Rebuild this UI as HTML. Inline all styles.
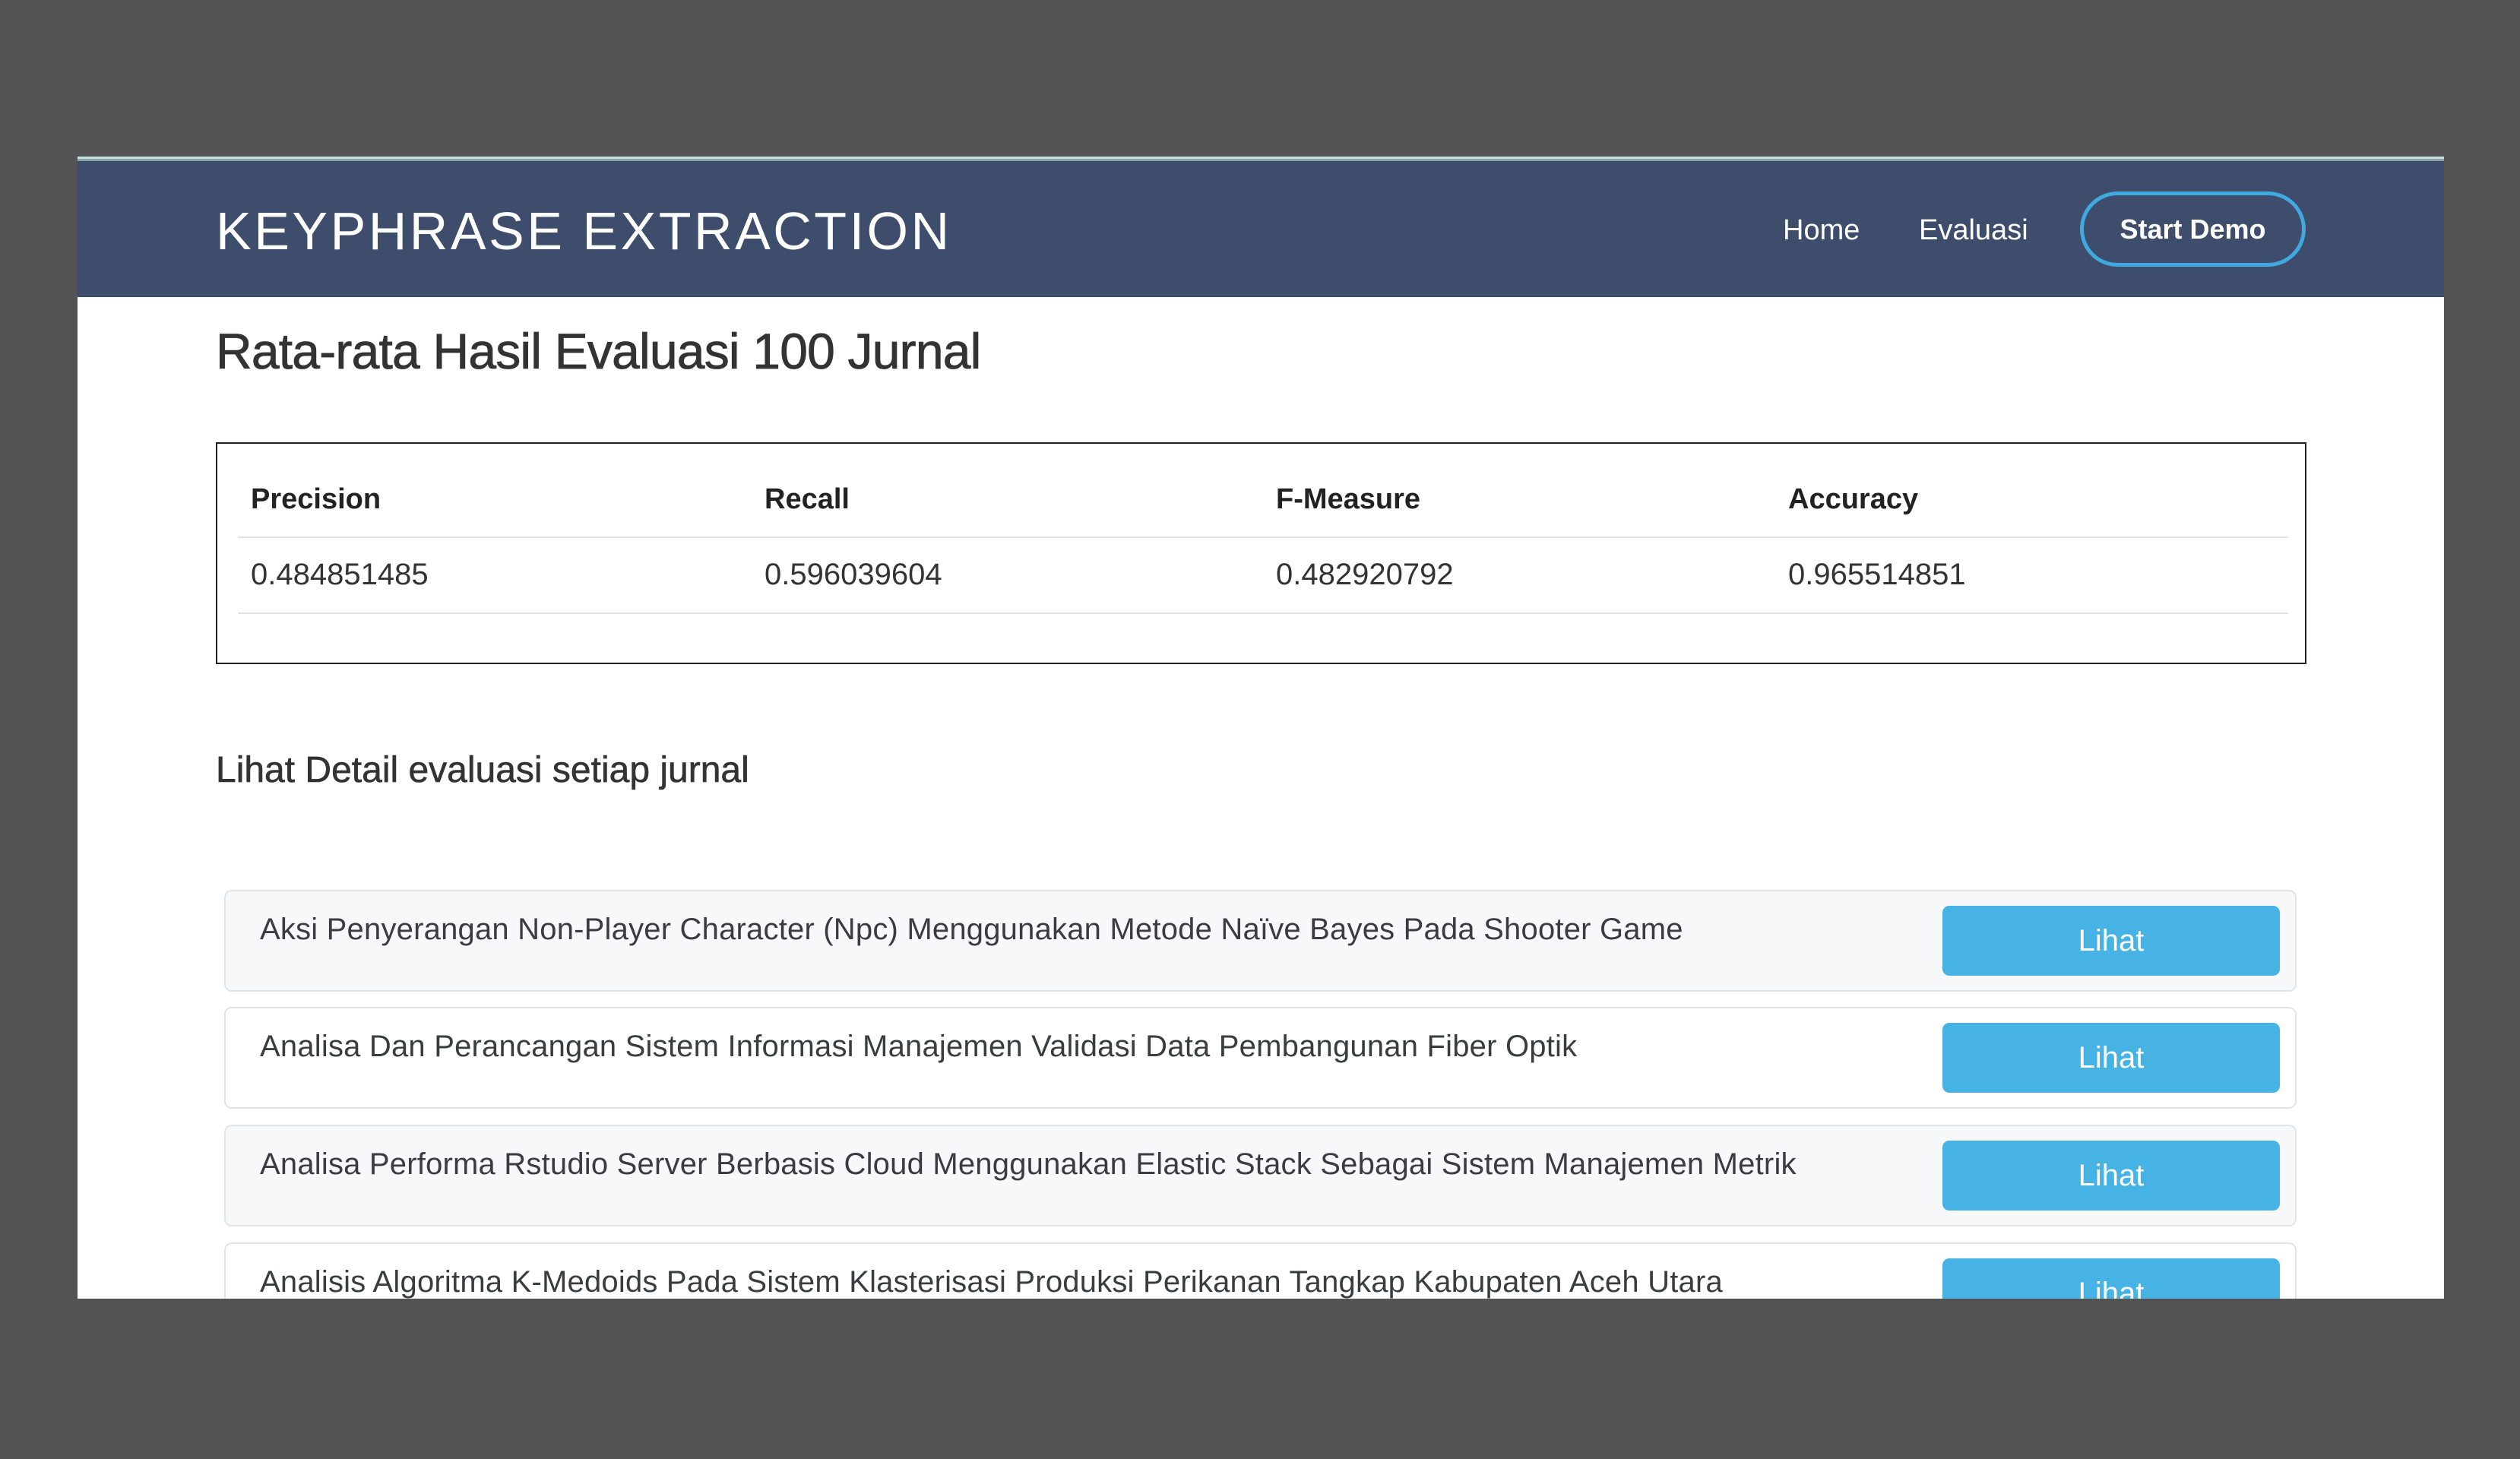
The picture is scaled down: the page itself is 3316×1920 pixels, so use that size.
<!DOCTYPE html>
<html><head><meta charset="utf-8"><style>
*{margin:0;padding:0;box-sizing:border-box}
body{width:3316px;height:1920px;background:#535353;position:relative;overflow:hidden;font-family:"Liberation Sans",sans-serif;color:#37393d}
.frame{position:absolute;left:102px;top:206px;width:3114px;height:1503px;background:#fff;overflow:hidden}
.topline{position:absolute;left:0;top:0;width:100%;height:3px;background:#c5dfe0}
.topline2{position:absolute;left:0;top:3px;width:100%;height:3px;background:#8fa4ab}
.nav{position:absolute;left:0;top:6px;width:100%;height:179px;background:#3e4d6b}
.abs{position:absolute;white-space:nowrap}
.logo{left:182px;top:52px;font-size:70px;color:#fff;letter-spacing:3.5px}
.nl{font-size:38px;color:#fff;top:70px}
.btn{left:2635px;top:40px;width:297px;height:99px;border:5px solid #3fa9e0;border-radius:50px;color:#fff;font-weight:bold;font-size:36px;display:flex;align-items:center;justify-content:center}
h1{position:absolute;left:182px;top:218px;font-size:66px;font-weight:normal;color:#333;white-space:nowrap;letter-spacing:-0.8px;-webkit-text-stroke:0.8px #333}
.tbl{position:absolute;left:182px;top:376px;width:2751px;height:292px;border:2px solid #222}
.th{font-weight:bold;font-size:38px;top:52px;color:#222}
.td{font-size:40px;top:150px;color:#333}
.hl{position:absolute;left:27px;width:2698px;height:2px;background:#e2e3e7}
h2{position:absolute;left:182px;top:780px;font-size:48px;font-weight:normal;white-space:nowrap;color:#333;-webkit-text-stroke:0.6px #333}
.card{position:absolute;left:193px;width:2727px;height:134px;border:2px solid #e3e4e8;border-radius:10px}
.card .t{position:absolute;left:45px;top:28px;font-size:40px;letter-spacing:0.2px;white-space:nowrap;color:#3a3c40}
.card .b{position:absolute;left:2259px;top:19px;width:444px;height:92px;background:#47b2e4;border-radius:9px;color:#fff;font-size:40px;display:flex;align-items:center;justify-content:center}
</style></head><body>
<div class="frame">
<div class="topline"></div><div class="topline2"></div>
<div class="nav">
<div class="abs logo">KEYPHRASE EXTRACTION</div>
<div class="abs nl" style="left:2244px">Home</div>
<div class="abs nl" style="left:2423px">Evaluasi</div>
<div class="abs btn">Start Demo</div>
</div>
<h1>Rata-rata Hasil Evaluasi 100 Jurnal</h1>
<div class="tbl">
<div class="abs th" style="left:44px">Precision</div>
<div class="abs th" style="left:720px">Recall</div>
<div class="abs th" style="left:1393px">F-Measure</div>
<div class="abs th" style="left:2067px">Accuracy</div>
<div class="hl" style="top:122px"></div>
<div class="abs td" style="left:44px">0.484851485</div>
<div class="abs td" style="left:720px">0.596039604</div>
<div class="abs td" style="left:1393px">0.482920792</div>
<div class="abs td" style="left:2067px">0.965514851</div>
<div class="hl" style="top:222px"></div>
</div>
<h2>Lihat Detail evaluasi setiap jurnal</h2>
<div class="card" style="top:965px;background:#f7f8fa"><div class="t">Aksi Penyerangan Non-Player Character (Npc) Menggunakan Metode Naïve Bayes Pada Shooter Game</div><div class="b">Lihat</div></div>
<div class="card" style="top:1119px;background:#fff"><div class="t">Analisa Dan Perancangan Sistem Informasi Manajemen Validasi Data Pembangunan Fiber Optik</div><div class="b">Lihat</div></div>
<div class="card" style="top:1274px;background:#f7f8fa"><div class="t">Analisa Performa Rstudio Server Berbasis Cloud Menggunakan Elastic Stack Sebagai Sistem Manajemen Metrik</div><div class="b">Lihat</div></div>
<div class="card" style="top:1429px;background:#fff"><div class="t">Analisis Algoritma K-Medoids Pada Sistem Klasterisasi Produksi Perikanan Tangkap Kabupaten Aceh Utara</div><div class="b">Lihat</div></div>
</div>
</body></html>
